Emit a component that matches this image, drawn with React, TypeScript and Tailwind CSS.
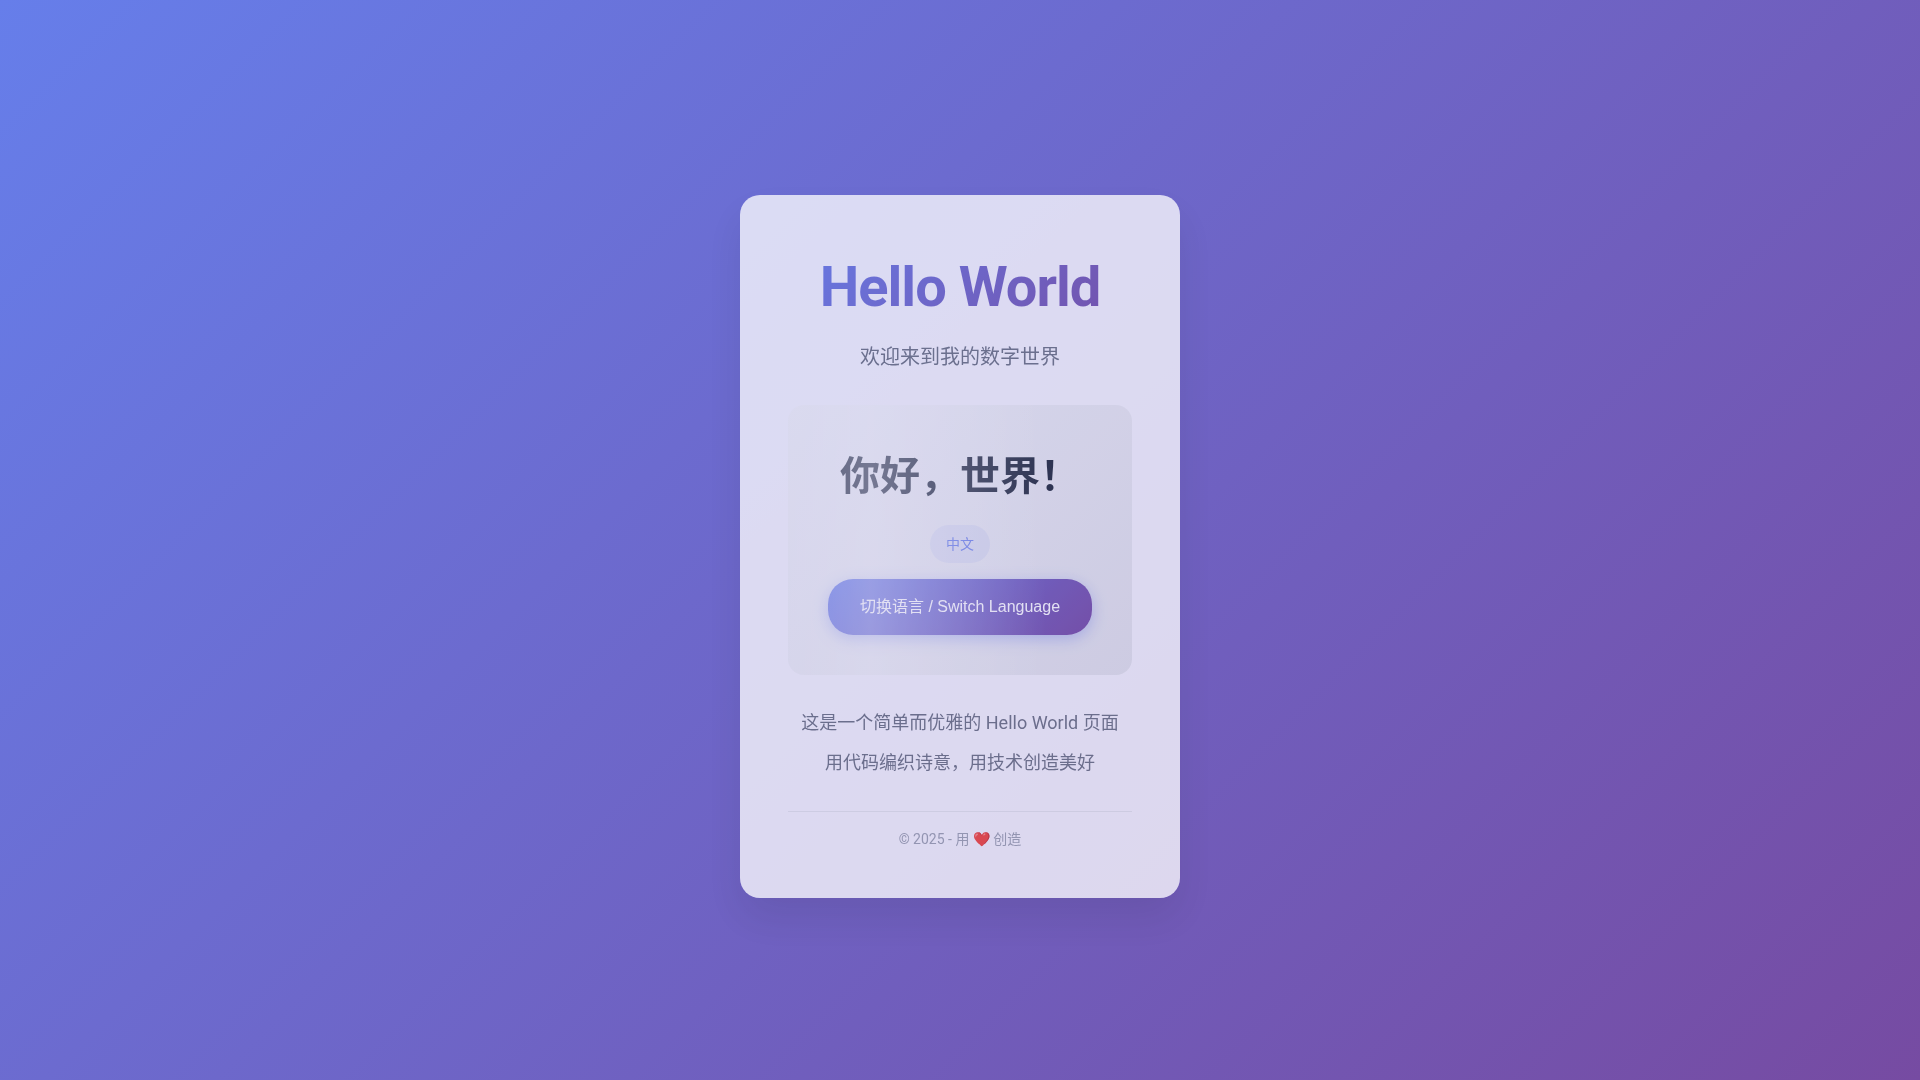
import { useState } from 'react'

const greetings = [
  { text: '你好，世界！', language: '中文' },
  { text: 'Hello, World!', language: 'English' },
]

export default function App() {
  const [index, setIndex] = useState(0)
  const greeting = greetings[index]

  return (
    <div
      lang="zh-CN"
      className="flex min-h-screen items-center justify-center bg-linear-[135deg,#667eea_0%,#764ba2_100%] font-[Roboto,'Noto_Sans_CJK_SC',sans-serif]"
    >
      <main className="mt-3 rounded-[20px] bg-white/95 p-12 text-center opacity-80 shadow-[0_20px_40px_rgba(0,0,0,0.1)]">
        <h1 className="mb-2.5 bg-linear-[135deg,#667eea,#764ba2] bg-clip-text text-[56px] leading-[88px] font-bold tracking-[-1px] text-transparent">
          Hello World
        </h1>
        <p className="mb-8 text-xl leading-8 text-[#6b7280]">欢迎来到我的数字世界</p>

        <section className="relative overflow-hidden rounded-2xl bg-linear-[135deg,#f3f4f6,#e5e7eb] p-10">
          <h2 className="mb-4 text-[40px] leading-16 font-bold text-[#1f2937]">{greeting.text}</h2>
          <span className="mb-4 inline-block rounded-[20px] bg-[#667eea]/10 px-4 py-2 align-top text-sm leading-[22px] text-[#667eea]">
            {greeting.language}
          </span>
          <button
            type="button"
            onClick={() => setIndex((index + 1) % greetings.length)}
            className="mx-auto block rounded-[25px] bg-linear-[135deg,#667eea,#764ba2] px-8 py-4 font-['Liberation_Sans','Noto_Sans_CJK_SC',sans-serif] text-base text-white shadow-[0_4px_15px_rgba(102,126,234,0.4)]"
          >
            切换语言 / Switch Language
          </button>
          <div className="pointer-events-none absolute inset-y-0 left-0 w-3/4 bg-linear-[90deg,rgba(255,255,255,0.21),rgba(255,255,255,0.4)_32%,transparent]" />
        </section>

        <div className="mt-8 space-y-2 text-lg leading-8 text-[#6b7280]">
          <p>这是一个简单而优雅的 Hello World 页面</p>
          <p>用代码编织诗意，用技术创造美好</p>
        </div>

        <footer className="mt-8 border-t border-[#e5e7eb] pt-4 text-sm leading-[22px] text-[#9ca3af]">
          © 2025 - 用 ❤️ 创造
        </footer>
      </main>
    </div>
  )
}
